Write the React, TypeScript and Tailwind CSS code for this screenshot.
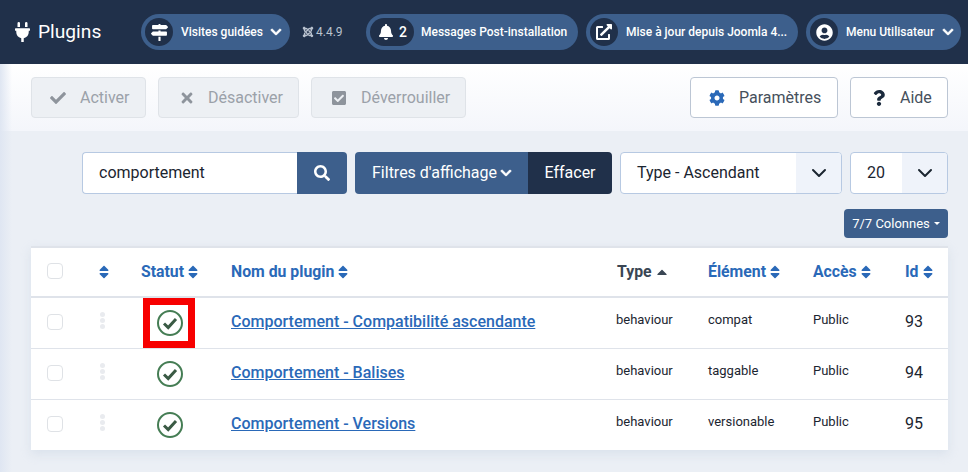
import React from "react";
import {
  FaPlug, FaMapSigns, FaChevronDown, FaJoomla, FaBell, FaExternalLinkAlt, FaUserCircle,
  FaCheck, FaTimes, FaCheckSquare, FaCog, FaQuestion, FaSearch, FaSort, FaCaretUp,
} from "react-icons/fa";

const GRID = "grid grid-cols-[68px_42px_90px_386px_91px_105px_92px_43px] items-center";

function Pill({ className, icon, children }: { className: string; icon: React.ReactNode; children: React.ReactNode }) {
  return (
    <div className={`flex h-9 items-center rounded-full bg-[#3d5f8c] p-1 text-[12px] font-medium text-white ${className}`}>
      {icon}
      {children}
    </div>
  );
}

function Circle({ children }: { children: React.ReactNode }) {
  return <span className="flex h-7 w-7 shrink-0 items-center justify-center rounded-full bg-[#20304a] text-white">{children}</span>;
}

function DisabledBtn({ className, icon, label }: { className: string; icon: React.ReactNode; label: string }) {
  return (
    <div className={`flex h-[41px] items-center rounded border border-[#dfe3e8] bg-[#edf0f4] text-[16px] text-[#9ba1a9] ${className}`}>
      <span className="flex w-4 justify-center text-[#8e949c]">{icon}</span>
      {label}
    </div>
  );
}

function Head({ label }: { label: string }) {
  return (
    <div className="flex items-center text-[15.8px] font-bold text-[#2a69b8]">
      {label}
      <FaSort className="ml-px text-[16px] text-[#2a69b8]" />
    </div>
  );
}

function Chevron() {
  return (
    <svg width="16" height="16" viewBox="0 0 16 16" fill="none" stroke="#1b2530" strokeWidth="2" strokeLinecap="round" strokeLinejoin="round">
      <path d="M2 5l6 6 6-6" />
    </svg>
  );
}

function StatusIcon() {
  return (
    <svg width="26" height="26" viewBox="0 0 26 26" fill="none">
      <circle cx="13" cy="13" r="12" stroke="#457d54" strokeWidth="2" />
      <path d="M7 13.5l4.2 4 7.8-8.5" stroke="#3a5a44" strokeWidth="3" />
    </svg>
  );
}

function Row({ name, element, id, boxed, h }: { name: string; element: string; id: number; boxed?: boolean; h: string }) {
  return (
    <div className={`${GRID} ${h} border-b border-[#dfe3ea] last:border-b-0`}>
      <div className="pb-[3px] pl-4">
        <span className="block h-4 w-4 rounded-[4px] border border-[#dfe2e6] bg-white" />
      </div>
      <div className="flex flex-col gap-[1px] pb-[5px] pl-px">
        <span className="h-[5px] w-[5px] rounded-full bg-[#e9ebef]" />
        <span className="h-[5px] w-[5px] rounded-full bg-[#e9ebef]" />
        <span className="h-[5px] w-[5px] rounded-full bg-[#e9ebef]" />
      </div>
      <div className="flex h-full items-center">
        {boxed ? (
          <span className="ml-[2px] flex h-[50px] w-[52px] items-center justify-center border-[7px] border-[#f70000] pl-px">
            <StatusIcon />
          </span>
        ) : (
          <span className="ml-[16px] flex"><StatusIcon /></span>
        )}
      </div>
      <a className="pb-[3px] text-[16px] font-medium text-[#2a69b8] underline">{name}</a>
      <div className="-ml-px pb-[7px] text-[13px] text-[#1b2530]">behaviour</div>
      <div className="pb-[7px] text-[13px] text-[#1b2530]">{element}</div>
      <div className="pb-[7px] text-[13px] text-[#1b2530]">Public</div>
      <div className="pb-[3px] text-[16px] text-[#1b2530]">{id}</div>
    </div>
  );
}

export default function App() {
  return (
    <div className="relative h-[472px] w-[968px] overflow-hidden bg-[#ebeff5] font-['Roboto',sans-serif]">
      <header className="flex h-16 items-center bg-[#20304a] pl-[14px] text-white">
        <FaPlug className="w-[17px] text-[20px]" />
        <span className="ml-[7px] w-[103px] text-[19.2px]">Plugins</span>
        <Pill className="w-[149px]" icon={<Circle><FaMapSigns className="text-[17px]" /></Circle>}>
          <span className="ml-[8px]">Visites guidées</span>
          <FaChevronDown className="ml-[7px] stroke-[30] text-[12px]" />
        </Pill>
        <div className="ml-3 flex w-[64px] items-center text-[12px] text-[#b9c2cf]">
          <FaJoomla className="mr-[2px] text-[12px]" />
          4.4.9
        </div>
        <Pill className="w-[212px]" icon={
          <span className="flex h-7 w-[44px] shrink-0 items-center gap-[5px] rounded-full bg-[#20304a] pl-2 text-[14px]">
            <FaBell className="text-[16px]" />2
          </span>}>
          <span className="ml-[7px]">Messages Post-installation</span>
        </Pill>
        <Pill className="ml-2 w-[212px]" icon={<Circle><FaExternalLinkAlt className="text-[16px]" /></Circle>}>
          <span className="ml-2">Mise à jour depuis Joomla 4...</span>
        </Pill>
        <Pill className="ml-2 w-[155px]" icon={<Circle><FaUserCircle className="text-[17px]" /></Circle>}>
          <span className="ml-2">Menu Utilisateur</span>
          <FaChevronDown className="ml-2 stroke-[30] text-[12px]" />
        </Pill>
      </header>

      <div className="flex h-[67px] items-center gap-3 bg-gradient-to-b from-white to-[#f4f6fb] pl-[31px] pr-5">
        <DisabledBtn className="w-[115px] gap-[14px] pl-[18px]" icon={<FaCheck className="text-[16px]" />} label="Activer" />
        <DisabledBtn className="w-[141px] gap-[13px] pl-[20px]" icon={<FaTimes className="text-[16px]" />} label="Désactiver" />
        <DisabledBtn className="w-[155px] gap-[14px] pl-[19px]" icon={<FaCheckSquare className="text-[16px]" />} label="Déverrouiller" />
        <div className="ml-auto flex gap-3">
          <div className="flex h-[41px] w-[148px] items-center gap-[14px] rounded border border-[#bcc6d4] bg-white pl-[18px] text-[16px] text-[#46505c]">
            <FaCog className="text-[16px] text-[#2a69b8]" />Paramètres
          </div>
          <div className="flex h-[41px] w-[98px] items-center gap-[13px] rounded border border-[#bcc6d4] bg-white pl-[20px] text-[16px] text-[#46505c]">
            <FaQuestion className="text-[16px] text-[#1b2a3d]" />Aide
          </div>
        </div>
      </div>

      <div className="flex flex-col px-5 pt-[21px]">
        <div className="flex h-[42px] items-stretch pl-[62px]">
          <div className="flex w-[215px] items-center rounded-l border border-r-0 border-[#b7c9e2] bg-white pl-4 text-[16px] text-[#1b2530]">comportement</div>
          <div className="flex w-[50px] items-center justify-center rounded-r bg-[#3d5f8c] text-white"><FaSearch className="text-[16px]" /></div>
          <div className="ml-2 flex w-[173px] items-center rounded-l bg-[#3d5f8c] pl-[17px] text-[16px] text-white">
            Filtres d'affichage<FaChevronDown className="ml-[3px] stroke-[30] text-[12px]" />
          </div>
          <div className="flex w-[84px] items-center justify-center rounded-r bg-[#20304a] text-[16px] text-white">Effacer</div>
          <div className="ml-2 flex w-[222px] items-center overflow-hidden rounded border border-[#b7c9e2] bg-white text-[16px] text-[#1b2530]">
            <span className="flex-1 pl-4">Type - Ascendant</span>
            <span className="flex h-full w-[45px] items-center justify-center bg-[#eff3fa]"><Chevron /></span>
          </div>
          <div className="ml-2 flex w-[98px] items-center overflow-hidden rounded border border-[#b7c9e2] bg-white text-[16px] text-[#1b2530]">
            <span className="flex-1 pl-4">20</span>
            <span className="flex h-full w-[45px] items-center justify-center bg-[#eff3fa]"><Chevron /></span>
          </div>
        </div>
        <div className="mt-[15px] flex justify-end">
          <div className="flex h-[29px] w-[104px] items-center justify-center rounded bg-[#3d5f8c] text-[13px] text-white">
            7/7 Colonnes
            <span className="ml-1 h-0 w-0 border-x-[3px] border-t-[3px] border-x-transparent border-t-white" />
          </div>
        </div>
        <div className="ml-[11px] mt-[8px] w-[917px] border-t-2 border-[#dfe3ea] bg-white shadow-[0_4px_10px_rgba(180,195,215,0.3)]">
          <div className={`${GRID} h-[50px] border-b-2 border-[#dfe3ea]`}>
            <div className="pb-[2px] pl-4"><span className="block h-4 w-4 rounded-[4px] border border-[#dfe2e6] bg-white" /></div>
            <div><FaSort className="-ml-[3px] text-[16px] text-[#2a69b8]" /></div>
            <Head label="Statut" />
            <Head label="Nom du plugin" />
            <div className="flex items-center text-[15.8px] font-bold text-[#3a4654]">
              Type<FaCaretUp className="ml-[2px] text-[16px]" />
            </div>
            <Head label="Élément" />
            <Head label="Accès" />
            <Head label="Id" />
          </div>
          <Row h="h-[51px]" boxed name="Comportement - Compatibilité ascendante" element="compat" id={93} />
          <Row h="h-[51px]" name="Comportement - Balises" element="taggable" id={94} />
          <Row h="h-[50px]" name="Comportement - Versions" element="versionable" id={95} />
        </div>
      </div>
      <div className="pointer-events-none absolute bottom-0 left-0 top-16 w-3 bg-gradient-to-r from-[#dfe6f2] to-transparent" />
    </div>
  );
}
